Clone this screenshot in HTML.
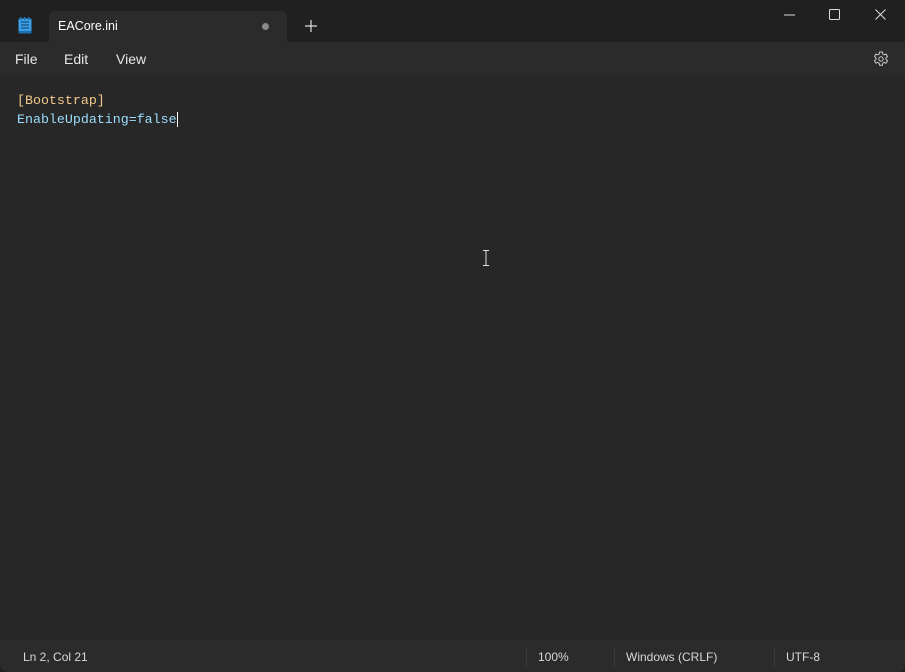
<!DOCTYPE html>
<html><head><style>
body{margin:0;width:905px;height:672px;background:#202020;overflow:hidden;font-family:"Liberation Sans",sans-serif;position:relative}
.title{position:absolute;left:0;top:0;width:905px;height:42px;background:#202020}
.tab{position:absolute;left:49px;top:11px;width:238px;height:31px;background:#2b2b2b;border-radius:7px 7px 0 0}
.tab span{position:absolute;left:9px;top:8px;color:#fff;font-size:12.5px}
.dot{position:absolute;left:213px;top:12px;width:7px;height:7px;border-radius:50%;background:#8a8a8a}
.menu{position:absolute;left:0;top:42px;width:905px;height:34px;background:#2b2b2b}
.menu span{position:absolute;top:9px;color:#e8e8e8;font-size:14px}
.editor{position:absolute;left:0;top:76px;width:905px;height:564px;background:#272727}
.code{position:absolute;left:17px;top:15px;font-family:"Liberation Mono",monospace;font-size:13.3px;line-height:19px;white-space:pre}
.status{position:absolute;left:0;top:640px;width:905px;height:32px;background:#2b2b2b;border-radius:0 0 8px 8px}
.status span{position:absolute;top:10px;color:#d8d8d8;font-size:12px}
.sep{position:absolute;top:7px;width:1px;height:20px;background:#3a3a3a}
</style></head><body>
<div class="title">
<svg style="position:absolute;left:18px;top:17px" width="14" height="17" viewBox="0 0 14 17"><rect x="0.5" y="1.5" width="13" height="15" rx="1.5" fill="#3aa0e8"/><rect x="0.5" y="14" width="13" height="2.5" fill="#1d6fb0"/><g stroke="#0c3d66" stroke-width="1"><line x1="3" y1="5" x2="11" y2="5"/><line x1="3" y1="8" x2="11" y2="8"/><line x1="3" y1="11" x2="11" y2="11"/></g><g fill="#1d6fb0"><rect x="2" y="0" width="1.5" height="3"/><rect x="6" y="0" width="1.5" height="3"/><rect x="10" y="0" width="1.5" height="3"/></g></svg>
<div class="tab"><span>EACore.ini</span><div class="dot"></div></div>
<svg style="position:absolute;left:305px;top:20px" width="12" height="12"><path d="M6 0V12M0 6H12" stroke="#ddd" stroke-width="1.2"/></svg>
<svg style="position:absolute;left:784px;top:14px" width="12" height="2"><path d="M0 1H11" stroke="#ddd" stroke-width="1"/></svg>
<svg style="position:absolute;left:829px;top:9px" width="12" height="12"><rect x="0.5" y="0.5" width="10" height="10" rx="1" fill="none" stroke="#ddd"/></svg>
<svg style="position:absolute;left:875px;top:9px" width="12" height="12"><path d="M0.5 0.5L10.5 10.5M10.5 0.5L0.5 10.5" stroke="#ddd"/></svg>
</div>
<div class="menu">
<span style="left:15px">File</span><span style="left:64px">Edit</span><span style="left:116px">View</span>
<svg style="position:absolute;left:873px;top:9px" width="16" height="16" viewBox="0 0 16 16"><path d="M6.6 1h2.8l.4 2 1.4.8 1.9-.7 1.4 2.4-1.5 1.3v1.6l1.5 1.3-1.4 2.4-1.9-.7-1.4.8-.4 2H6.6l-.4-2-1.4-.8-1.9.7L1.5 9.7 3 8.4V6.8L1.5 5.5l1.4-2.4 1.9.7 1.4-.8z" fill="none" stroke="#ccc" stroke-width="1"/><circle cx="8" cy="8" r="2.2" fill="none" stroke="#ccc"/></svg>
</div>
<div class="editor">
<div class="code"><span style="color:#f2c98a">[Bootstrap]</span>
<span style="color:#9cdcfe">EnableUpdating=false</span><span style="border-left:1px solid #fff"></span></div>
<svg style="position:absolute;left:482px;top:174px" width="8" height="16"><path d="M1 .5h6M1 15.5h6M4 .5v15" stroke="#ddd"/></svg>
</div>
<div class="status">
<span style="left:23px">Ln 2, Col 21</span>
<div class="sep" style="left:526px"></div><span style="left:538px">100%</span>
<div class="sep" style="left:614px"></div><span style="left:626px">Windows (CRLF)</span>
<div class="sep" style="left:774px"></div><span style="left:786px">UTF-8</span>
</div>
</body></html>
